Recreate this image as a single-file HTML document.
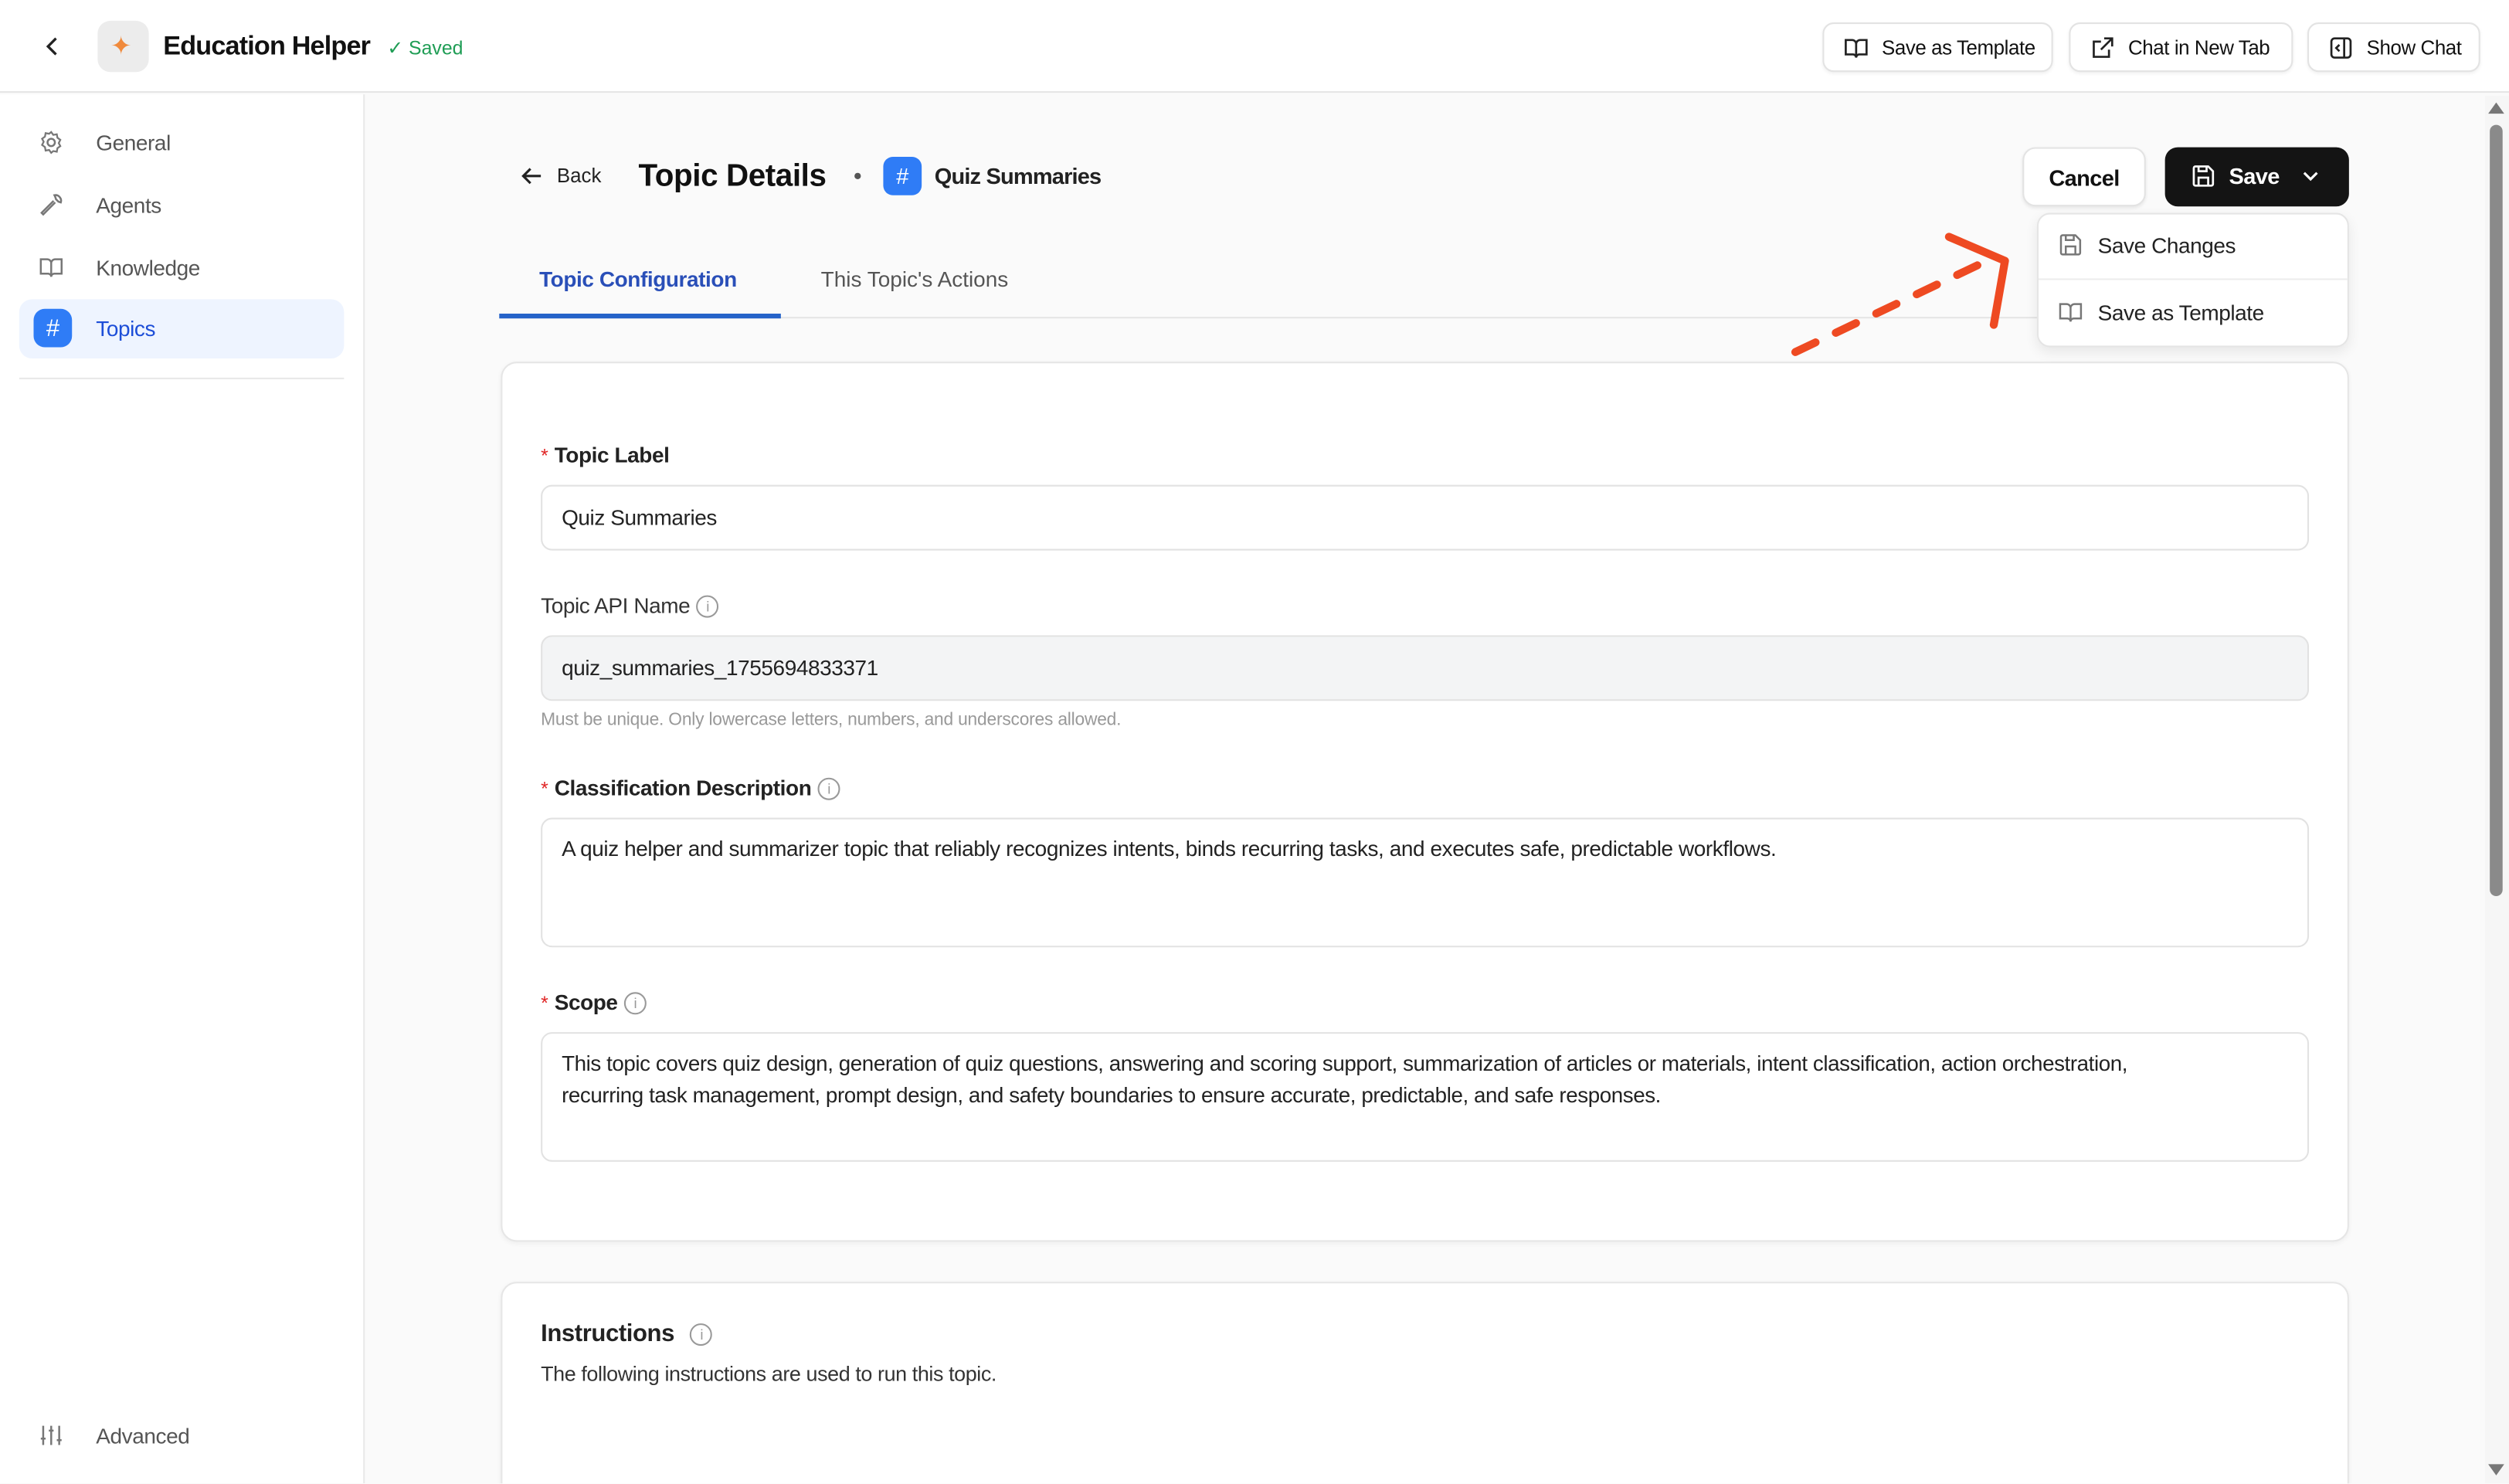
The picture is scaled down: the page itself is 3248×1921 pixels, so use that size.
<!DOCTYPE html>
<html><head><meta charset="utf-8"><style>
*{box-sizing:border-box;margin:0;padding:0}
html,body{width:3248px;height:1921px;overflow:hidden;background:#fafafa;font-family:"Liberation Sans",sans-serif;color:#111}
#w{position:absolute;left:0;top:0;width:1568px;height:927px;transform:scale(2.07143);transform-origin:0 0;background:#fafafa;overflow:hidden}
.a{position:absolute}
.top{left:0;top:0;width:1568px;height:58px;background:#fff;border-bottom:1px solid #e5e5e5}
.btn{position:absolute;top:14px;height:31px;border:1px solid #e3e3e3;border-radius:7px;background:#fff;font-size:12.5px;display:flex;align-items:center;padding-left:12px;gap:8px;box-shadow:0 1px 2px rgba(0,0,0,.06);letter-spacing:-.2px}
.side{left:0;top:59px;width:228px;height:868px;background:#fff;border-right:1px solid #e8e8e8}
.ni{position:absolute;left:24px;font-size:13.5px;color:#555;display:flex;align-items:center;gap:20px;letter-spacing:-.2px}
svg{display:block}
.card{position:absolute;left:313px;width:1155px;background:#fff;border:1px solid #e6e6e6;border-radius:10px;box-shadow:0 1px 3px rgba(0,0,0,.05)}
.lbl{position:absolute;left:338px;font-size:13.5px;font-weight:bold;color:#222;display:flex;align-items:center;gap:4px;letter-spacing:-.2px}
.lbl .s{color:#e02424;font-weight:normal;font-size:12px}
.inp{position:absolute;left:338px;width:1105px;border:1px solid #e2e2e2;border-radius:7px;background:#fff;font-size:13.5px;padding:0 12px;color:#222;letter-spacing:-.2px}
.info{width:14px;height:14px;border:1.2px solid #999;border-radius:50%;font-size:9px;color:#999;display:flex;align-items:center;justify-content:center;font-weight:normal}
</style></head><body><div id="w">
<div class="a top"></div>
<svg class="a" style="left:27px;top:22px" width="12" height="14" viewBox="0 0 12 14"><path d="M8 2L3 7l5 5" fill="none" stroke="#222" stroke-width="1.6"/></svg>
<div class="a" style="left:61px;top:13px;width:32px;height:32px;border-radius:8px;background:#ececec"></div>
<div class="a" style="left:69px;top:19px;font-size:16px;color:#f08a3c">✦</div>
<div class="a" style="left:102px;top:20px;font-size:16.5px;font-weight:bold;color:#111;letter-spacing:-.4px">Education Helper</div>
<div class="a" style="left:242px;top:23px;font-size:12px;color:#1f9d55">✓ Saved</div>
<div class="btn" style="left:1139px;width:144px"><svg width="16" height="16" viewBox="0 0 16 16"><path d="M1.5 3h4a2.5 2.5 0 012.5 2.5V14a2 2 0 00-2-2H1.5zM14.5 3h-4A2.5 2.5 0 008 5.5V14a2 2 0 012-2h4.5z" fill="none" stroke="#222" stroke-width="1.3"/></svg>Save as Template</div>
<div class="btn" style="left:1293px;width:140px"><svg width="16" height="16" viewBox="0 0 16 16"><path d="M9 2h5v5M14 2L7 9M12 9v4.5H2.5V4H7" fill="none" stroke="#222" stroke-width="1.3"/></svg>Chat in New Tab</div>
<div class="btn" style="left:1442px;width:108px"><svg width="16" height="16" viewBox="0 0 16 16"><rect x="2" y="2" width="12" height="12" rx="2" fill="none" stroke="#222" stroke-width="1.3"/><path d="M10 2v12M7 6L5 8l2 2" fill="none" stroke="#222" stroke-width="1.3"/></svg>Show Chat</div>

<div class="a side"></div>
<div class="ni" style="top:81px"><svg width="16" height="16" viewBox="0 0 16 16"><circle cx="8" cy="8" r="2.3" fill="none" stroke="#777" stroke-width="1.2"/><path d="M8 1.5l1.3 1.8 2.2-.4.4 2.2 1.8 1.3-1 2 1 1.9-1.8 1.3-.4 2.2-2.2-.4L8 14.5l-1.3-1.8-2.2.4-.4-2.2-1.8-1.3 1-2-1-1.9 1.8-1.3.4-2.2 2.2.4z" fill="none" stroke="#777" stroke-width="1.1"/></svg>General</div>
<div class="ni" style="top:120px"><svg width="16" height="16" viewBox="0 0 16 16"><path d="M10 2a3.5 3.5 0 014 4.5l-1.5-.5-1.5-1.5-.5-1.5zM10.5 6.5L3 14l-1-1 7.5-7.5" fill="none" stroke="#777" stroke-width="1.2"/></svg>Agents</div>
<div class="ni" style="top:159px"><svg width="16" height="16" viewBox="0 0 16 16"><path d="M1.5 3h4a2.5 2.5 0 012.5 2.5V14a2 2 0 00-2-2H1.5zM14.5 3h-4A2.5 2.5 0 008 5.5V14a2 2 0 012-2h4.5z" fill="none" stroke="#777" stroke-width="1.2"/></svg>Knowledge</div>
<div class="a" style="left:12px;top:187px;width:203px;height:37px;background:#eef4ff;border-radius:8px"></div>
<div class="ni" style="top:193px;left:21px;color:#1d4ed8;gap:15px"><div style="width:24px;height:24px;border-radius:7px;background:#2f7cf6;color:#fff;font-size:15px;display:flex;align-items:center;justify-content:center">#</div>Topics</div>
<div class="a" style="left:12px;top:236px;width:203px;height:1px;background:#e8e8e8"></div>
<div class="ni" style="top:889px"><svg width="16" height="16" viewBox="0 0 16 16"><path d="M3 2v12M8 2v12M13 2v12M1.5 10h3M6.5 5h3M11.5 11h3" fill="none" stroke="#777" stroke-width="1.2"/></svg>Advanced</div>

<svg class="a" style="left:324px;top:102px" width="16" height="16" viewBox="0 0 16 16"><path d="M14 8H3M7.5 3.5L3 8l4.5 4.5" fill="none" stroke="#222" stroke-width="1.5"/></svg>
<div class="a" style="left:348px;top:103px;font-size:12.5px;color:#222">Back</div>
<div class="a" style="left:399px;top:99px;font-size:19.5px;font-weight:bold;color:#111;letter-spacing:-.2px">Topic Details</div>
<div class="a" style="left:534px;top:108px;width:4px;height:4px;border-radius:50%;background:#555"></div>
<div class="a" style="left:552px;top:98px;width:24px;height:24px;border-radius:6px;background:#2f7cf6;color:#fff;font-size:14px;display:flex;align-items:center;justify-content:center">#</div>
<div class="a" style="left:584px;top:102px;font-size:14px;font-weight:bold;color:#222;letter-spacing:-.4px">Quiz Summaries</div>

<div class="a" style="left:1264px;top:92px;width:77px;height:37px;border:1px solid #e3e3e3;border-radius:8px;background:#fff;font-size:14px;font-weight:bold;display:flex;align-items:center;justify-content:center;box-shadow:0 1px 2px rgba(0,0,0,.08);letter-spacing:-.3px">Cancel</div>
<div class="a" style="left:1353px;top:92px;width:115px;height:37px;border-radius:8px;background:#141414"></div>
<svg class="a" style="left:1369px;top:102px" width="16" height="16" viewBox="0 0 16 16"><path d="M2 3a1 1 0 011-1h8l3 3v8a1 1 0 01-1 1H3a1 1 0 01-1-1z" fill="none" stroke="#fff" stroke-width="1.3"/><path d="M5 2v3h5V2M5 14V9h6v5" fill="none" stroke="#fff" stroke-width="1.3"/></svg>
<div class="a" style="left:1393px;top:102px;font-size:14px;font-weight:bold;color:#fff;letter-spacing:-.3px">Save</div>
<svg class="a" style="left:1438px;top:104px" width="12" height="12" viewBox="0 0 12 12"><path d="M2 4l4 4 4-4" fill="none" stroke="#fff" stroke-width="1.5"/></svg>

<div class="a" style="left:312px;top:198px;width:1156px;height:1px;background:#e5e5e5"></div>
<div class="a" style="left:312px;top:196px;width:176px;height:3px;background:#2563c9"></div>
<div class="a" style="left:337px;top:167px;font-size:13.5px;color:#2a4fb8;font-weight:bold;letter-spacing:-.2px">Topic Configuration</div>
<div class="a" style="left:513px;top:167px;font-size:13.5px;color:#555">This Topic's Actions</div>

<div class="card" style="top:226px;height:550px"></div>
<div class="lbl" style="top:277px"><span class="s">*</span>Topic Label</div>
<div class="inp" style="top:303px;height:41px;line-height:40px">Quiz Summaries</div>
<div class="lbl" style="top:371px;font-weight:normal;color:#333">Topic API Name <span class="info">i</span></div>
<div class="inp" style="top:397px;height:41px;line-height:40px;background:#f3f4f5">quiz_summaries_1755694833371</div>
<div class="a" style="left:338px;top:444px;font-size:11px;color:#999;letter-spacing:-.1px">Must be unique. Only lowercase letters, numbers, and underscores allowed.</div>
<div class="lbl" style="top:485px"><span class="s">*</span>Classification Description <span class="info">i</span></div>
<div class="inp" style="top:511px;height:81px;padding-top:10px;line-height:17px">A quiz helper and summarizer topic that reliably recognizes intents, binds recurring tasks, and executes safe, predictable workflows.</div>
<div class="lbl" style="top:619px"><span class="s">*</span>Scope <span class="info">i</span></div>
<div class="inp" style="top:645px;height:81px;padding-top:9px;line-height:20px;font-size:13.4px;letter-spacing:-.2px">This topic covers quiz design, generation of quiz questions, answering and scoring support, summarization of articles or materials, intent classification, action orchestration,<br>recurring task management, prompt design, and safety boundaries to ensure accurate, predictable, and safe responses.</div>

<div class="card" style="top:801px;height:140px"></div>
<div class="lbl" style="top:825px;font-size:15px">Instructions <span class="info" style="margin-left:6px">i</span></div>
<div class="a" style="left:338px;top:851px;font-size:13px;color:#333;letter-spacing:-.2px">The following instructions are used to run this topic.</div>

<div class="a" style="left:1273px;top:133px;width:195px;height:84px;background:#fff;border:1px solid #e5e5e5;border-radius:8px;box-shadow:0 3px 8px rgba(0,0,0,.08)"></div>
<div class="a" style="left:1274px;top:174px;width:193px;height:1px;background:#ececec"></div>
<div class="ni" style="left:1286px;top:145px;color:#222;gap:9px;font-size:13.5px"><svg width="16" height="16" viewBox="0 0 16 16"><path d="M2 3a1 1 0 011-1h8l3 3v8a1 1 0 01-1 1H3a1 1 0 01-1-1z" fill="none" stroke="#777" stroke-width="1.2"/><path d="M5 2v3h5V2M5 14V9h6v5" fill="none" stroke="#777" stroke-width="1.2"/></svg>Save Changes</div>
<div class="ni" style="left:1286px;top:187px;color:#222;gap:9px;font-size:13.5px"><svg width="16" height="16" viewBox="0 0 16 16"><path d="M1.5 3h4a2.5 2.5 0 012.5 2.5V14a2 2 0 00-2-2H1.5zM14.5 3h-4A2.5 2.5 0 008 5.5V14a2 2 0 012-2h4.5z" fill="none" stroke="#777" stroke-width="1.2"/></svg>Save as Template</div>

<svg class="a" style="left:0;top:0" width="1568" height="927"><path d="M1122 220L1248 160" stroke="#ee4a22" stroke-width="5" stroke-linecap="round" stroke-dasharray="14 14" fill="none"/><path d="M1218 148L1253 163L1246 203" stroke="#ee4a22" stroke-width="5" stroke-linecap="round" stroke-linejoin="round" fill="none"/></svg>

<div class="a" style="left:1553px;top:60px;width:15px;height:867px;background:#f6f6f6"></div>
<div class="a" style="left:1556px;top:78px;width:8px;height:482px;background:#8a8a8a;border-radius:4px"></div>
<div class="a" style="left:1555px;top:64px;width:0;height:0;border-left:5px solid transparent;border-right:5px solid transparent;border-bottom:7px solid #777"></div>
<div class="a" style="left:1555px;top:915px;width:0;height:0;border-left:5px solid transparent;border-right:5px solid transparent;border-top:7px solid #777"></div>
</div></body></html>
